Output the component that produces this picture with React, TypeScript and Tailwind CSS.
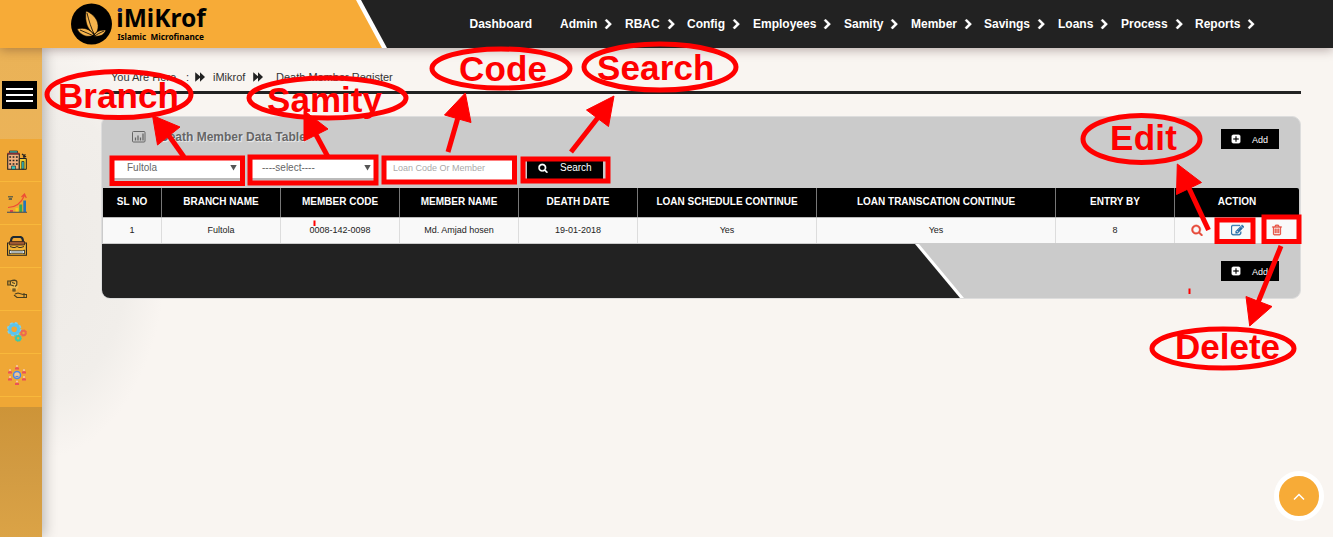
import React from 'react';

const NAV: [string, string][] = [
  ['Admin', 'w-[65px]'],
  ['RBAC', 'w-[62px]'],
  ['Config', 'w-[66px]'],
  ['Employees', 'w-[91px]'],
  ['Samity', 'w-[67px]'],
  ['Member', 'w-[73px]'],
  ['Savings', 'w-[74px]'],
  ['Loans', 'w-[63px]'],
  ['Process', 'w-[74px]'],
  ['Reports', 'w-[62px]'],
];

const COLS: [string, string][] = [
  ['SL NO', '1'],
  ['BRANCH NAME', 'Fultola'],
  ['MEMBER CODE', '0008-142-0098'],
  ['MEMBER NAME', 'Md. Amjad hosen'],
  ['DEATH DATE', '19-01-2018'],
  ['LOAN SCHEDULE CONTINUE', 'Yes'],
  ['LOAN TRANSCATION CONTINUE', 'Yes'],
  ['ENTRY BY', '8'],
];

const GRID = 'grid grid-cols-[59px_119px_119px_119px_119px_179px_239px_119px_124px]';

const PATHS = {
  chevron:
    'M1363 877l-742 742q-19 19-45 19t-45-19l-166-166q-19-19-19-45t19-45l531-531-531-531q-19-19-19-45t19-45l166-166q19-19 45-19t45 19l742 742q19 19 19 45t-19 45z',
  search:
    'M1216 832q0-185-131.5-316.5t-316.5-131.5-316.5 131.5-131.5 316.5 131.5 316.5 316.5 131.5 316.5-131.5 131.5-316.5zm512 832q0 52-38 90t-90 38q-54 0-90-38l-343-342q-179 124-399 124-143 0-273.5-55.5t-225-150-150-225-55.5-273.5 55.5-273.5 150-225 225-150 273.5-55.5 273.5 55.5 225 150 150 225 55.5 273.5q0 220-124 399l343 343q37 37 37 90z',
  plus:
    'M1408 960v-128q0-26-19-45t-45-19h-320v-320q0-26-19-45t-45-19h-128q-26 0-45 19t-19 45v320h-320q-26 0-45 19t-19 45v128q0 26 19 45t45 19h320v320q0 26 19 45t45 19h128q26 0 45-19t19-45v-320h320q26 0 45-19t19-45zm256-544v960q0 119-84.5 203.5t-203.5 84.5h-960q-119 0-203.5-84.5t-84.5-203.5v-960q0-119 84.5-203.5t203.5-84.5h960q119 0 203.5 84.5t84.5 203.5z',
  edit:
    'M888 1184l116-116-152-152-116 116v56h96v96h56zm440-720q-16-16-33 1l-350 350q-17 17-1 33t33-1l350-350q17-17 1-33zm80 594v190q0 119-84.5 203.5t-203.5 84.5h-832q-119 0-203.5-84.5t-84.5-203.5v-832q0-119 84.5-203.5t203.5-84.5h832q63 0 117 25 15 7 18 23 3 17-9 29l-49 49q-14 14-32 8-23-6-45-6h-832q-66 0-113 47t-47 113v832q0 66 47 113t113 47h832q66 0 113-47t47-113v-126q0-13 9-22l64-64q15-15 35-7t20 29zm-96-738l288 288-672 672h-288v-288zm444 132l-92 92-288-288 92-92q28-28 68-28t68 28l152 152q28 28 28 68t-28 68z',
  trash:
    'M704 736v576q0 14-9 23t-23 9h-64q-14 0-23-9t-9-23v-576q0-14 9-23t23-9h64q14 0 23 9t9 23zm256 0v576q0 14-9 23t-23 9h-64q-14 0-23-9t-9-23v-576q0-14 9-23t23-9h64q14 0 23 9t9 23zm256 0v576q0 14-9 23t-23 9h-64q-14 0-23-9t-9-23v-576q0-14 9-23t23-9h64q14 0 23 9t9 23zm128 724v-948h-896v948q0 22 7 40.5t14.5 27 10.5 8.5h832q3 0 10.5-8.5t14.5-27 7-40.5zm-672-1076h448l-48-117q-7-9-17-11h-317q-10 2-17 11zm928 32v64q0 14-9 23t-23 9h-96v948q0 83-47 143.5t-113 60.5h-832q-66 0-113-58.5t-47-141.5v-952h-96q-14 0-23-9t-9-23v-64q0-14 9-23t23-9h309l70-167q15-37 54-63t79-26h320q40 0 79 26t54 63l70 167h309q14 0 23 9t9 23z',
};

function Icon({ name, className }: { name: keyof typeof PATHS; className: string }) {
  return (
    <svg viewBox="0 0 1792 1792" className={className} fill="currentColor" stroke="currentColor" strokeWidth="50">
      <path d={PATHS[name]} />
    </svg>
  );
}

function Logo() {
  return (
    <svg className="ml-[70px] h-12 w-[160px] shrink-0" viewBox="70 0 160 48">
      <circle cx="91.500" cy="24" r="20.500" fill="#000" />
      <g fill="#f7b44c" stroke="#000" strokeWidth=".6">
        <path d="M86 11c8 3 13 10 12 17-.3 3-1.500 5-3.500 6-7-4-10-12-8.500-23z" />
        <path d="M77 29c7-2 13 0 17 6-6 3-13 1-17-6z" />
        <path d="M106 30c-6 0-10 1-12 6 6 1 10-1 12-6z" />
        <path d="M87 13c2 8 4 15 8 23M80 30c5 2 9 4 14 6M104 31c-4 2-7 3-9 5" fill="none" strokeWidth=".8" />
      </g>
      <text x="116.300" y="27" fontFamily="Noto Sans, Open Sans, sans-serif" fontWeight="700" fontSize="24.500" textLength="89.500" lengthAdjust="spacingAndGlyphs">iMiKrof</text>
      <circle cx="119.800" cy="10.300" r="2" fill="#252c74" />
      <text x="117.500" y="40" fontFamily="Noto Sans, sans-serif" fontWeight="700" fontSize="9.500" textLength="28.500" lengthAdjust="spacingAndGlyphs">Islamic</text>
      <text x="150.500" y="40" fontFamily="Noto Sans, sans-serif" fontWeight="700" fontSize="9.500" textLength="53.500" lengthAdjust="spacingAndGlyphs">Microfinance</text>
    </svg>
  );
}

const SIDE_ICONS: React.ReactNode[] = [
  <>
    <path d="M.7 4h11.600v15.300H.7z" fill="#f3b17f" stroke="#222" strokeWidth="1.100" />
    <path d="M2.500 1h8v2h-8z" fill="#38c5c1" stroke="#222" strokeWidth=".7" />
    <path d="M.5 3.500h12" stroke="#8a2b33" strokeWidth="1.500" />
    <path d="M2.300 7h9M2.300 10.500h9M2.300 14h9" stroke="#222" strokeWidth="1.500" strokeDasharray="1.800 1.500" />
    <path d="M4.500 16h4v3.300h-4z" fill="#38c5c1" stroke="#222" strokeWidth=".6" />
    <path d="M12.300 8.500h7v10.800h-7z" fill="#edc92f" stroke="#222" strokeWidth="1" />
    <path d="M14.800 11.500h2.200v7.500h-2.200z" fill="#38c5c1" stroke="#222" strokeWidth=".7" />
    <path d="M15 4l4 3M16 6.500l2.500-2M17 5v4" stroke="#222" strokeWidth="1.300" />
  </>,
  <>
    <path d="M1 3h5v1.500H1zM2 5h3v2H1.500z" fill="#6b6545" />
    <path d="M3 17h3v2H3z" fill="#e8483f" />
    <path d="M8.500 15h2.700v4H8.500z" fill="#f7cf1d" />
    <path d="M12.300 11.500h2.900V19h-2.900z" fill="#3aaa4e" />
    <path d="M16.300 7.500H19V19h-2.700z" fill="#2474bb" />
    <path d="M0 19.300h20" stroke="#575757" strokeWidth="1.200" />
    <path d="M1 14.500c8 0 13-4 16.500-12M14.500 4l3-3 1.800 4" fill="none" stroke="#ee4b35" strokeWidth="1.200" />
  </>,
  <>
    <path d="M4 6c0-3 1-5 3-5h6c2 0 3 2 3 5" fill="none" stroke="#1d2933" strokeWidth="2.200" />
    <path d="M.6 7h18.800v12.300H.6z" fill="#f5b637" stroke="#222" strokeWidth="1.100" />
    <path d="M2.500 5.500h15V9H2.500z" fill="#9c5831" stroke="#3b2417" strokeWidth=".8" />
    <path d="M3 10.500l3 1h2l2-1 2 1h2l3-1" fill="none" stroke="#222" strokeWidth=".9" />
    <path d="M2.500 14l2 .8h11l2-.8v4l-2-.8h-11l-2 .8z" fill="#d8e5ea" stroke="#222" strokeWidth=".8" />
  </>,
  <>
    <circle cx="7" cy="7" r="4.500" fill="#f3bd50" />
    <path d="M.8 2v4h2.500V2zm2.500 0c3-1 6-1 6.500.5V6L8 7.500M4 6l3 1M5 3.500l3 1" fill="none" stroke="#4a4020" strokeWidth="1.200" />
    <path d="M6 10h2v2H6zM8 15l3-1 5 1.500h3.500v3H10L7 16M17 14v4.500" fill="none" stroke="#4a4020" strokeWidth="1.100" />
  </>,
  <>
    <circle cx="7.200" cy="7.200" r="4.600" fill="none" stroke="#5bc4ec" strokeWidth="3.600" />
    <circle cx="7.200" cy="7.200" r="6.500" fill="none" stroke="#7bd0ee" strokeWidth="1.500" strokeDasharray="2.800 2.300" />
    <circle cx="16.500" cy="11" r="2.200" fill="none" stroke="#ed6950" strokeWidth="1.900" />
    <circle cx="16.500" cy="11" r="3.200" fill="none" stroke="#ed6950" strokeWidth=".8" strokeDasharray="1.200 1.300" />
    <circle cx="11.200" cy="16.200" r="2.200" fill="none" stroke="#3ecbaa" strokeWidth="1.900" />
    <circle cx="11.200" cy="16.200" r="3.300" fill="none" stroke="#3ecbaa" strokeWidth=".8" strokeDasharray="1.200 1.300" />
  </>,
  <>
    <circle cx="10" cy="10" r="3.500" fill="#f2c58d" stroke="#4a85e8" strokeWidth="1.500" />
    <path d="M8.500 11.500h3" stroke="#4a85e8" strokeWidth="1.200" />
    {[[10, 0], [3, 4], [17, 4], [3, 11], [17, 11], [10, 15.5]].map(([x, y]) => (
      <g key={`${x}-${y}`}>
        <circle cx={x} cy={y + 1.1} r="1.100" fill="#f7c4a2" />
        <path d={`M${x - 2} ${y + 4.4}v-1.600l1-.6h2l1 .6v1.600z`} fill="#eb5256" />
      </g>
    ))}
  </>,
];

function Sidebar() {
  return (
    <aside className="z-10 flex w-[42px] shrink-0 flex-col bg-linear-to-b from-[#eab257] to-[#f0b95f] shadow-[2px_0_14px_rgba(0,0,0,0.28)]">
      <div className="flex h-[91px] flex-col pt-[33px] pl-[2px]">
        <div className="flex h-7 w-[35px] flex-col justify-center gap-[4px] bg-black px-1">
          <span className="h-[2px] bg-white" />
          <span className="h-[2px] bg-white" />
          <span className="h-[2px] bg-white" />
        </div>
      </div>
      <div className="h-[268px] bg-[#efa735]">
        {SIDE_ICONS.map((icon, i) => (
          <div key={i} className="mr-px flex h-[43px] items-center border-b border-[#f8b83b] pl-[7px]">
            <svg viewBox="0 0 20 20" className="size-5">{icon}</svg>
          </div>
        ))}
      </div>
      <div className="flex-1 bg-linear-to-b from-[#cd9438] via-[#d29b42] to-[#dba346]" />
    </aside>
  );
}

function Forward() {
  return (
    <svg viewBox="0 0 10 10" className="h-[10px] w-[10px]" fill="#222">
      <path d="M.2.300L5 4.200V.3L10 5 5 9.700V5.800L.2 9.700z" />
    </svg>
  );
}

function AddButton() {
  return (
    <button className="flex h-5 w-[58px] items-center bg-black pl-[10px] text-[9px] leading-[12px] text-white">
      <Icon name="plus" className="mr-[11px] size-[10px]" />
      <span className="pt-[2px]">Add</span>
    </button>
  );
}

function Select({ value, className }: { value: string; className: string }) {
  return (
    <div className={`flex h-5 items-center justify-between border-b-2 border-[#bbb] bg-white pr-[4px] pb-[4px] text-[10px] text-[#666] ${className}`}>
      <span>{value}</span>
      <span className="mt-px h-[6px] w-[7px] bg-[#555] [clip-path:polygon(0_0,100%_0,50%_100%)]" />
    </div>
  );
}

function Panel() {
  return (
    <section className="mt-[22px] flex h-[183px] flex-col overflow-hidden rounded-[9px] border border-[#ddd] bg-[#cbcbcb]">
      <div className="flex h-10 items-center justify-between pr-[21px] pl-[30px] pt-[3px]">
        <h2 className="flex items-center pb-[4px] text-[12px] font-bold text-[#666] [text-shadow:1px_1px_1px_#eee]">
          <svg viewBox="0 0 14 12" className="mr-[14px] h-3 w-[14px]" fill="none" stroke="#666">
            <rect x=".5" y=".5" width="12.500" height="10.500" rx="1" />
            <path d="M3.500 9.500v-3M6 9.500v-5M8.500 9.500v-3M11 9.500v-7" strokeWidth="1.300" />
          </svg>
          Death Member Data Table
        </h2>
        <AddButton />
      </div>
      <div className="flex h-[31px] pt-[3px] pl-[12px]">
        <Select value="Fultola" className="w-[127px] pl-[13px]" />
        <Select value="----select----" className="ml-[11px] w-[123px] pl-[10px]" />
        <input
          placeholder="Loan Code Or Member"
          className="ml-[10px] h-5 w-[127px] bg-white pb-[4px] pl-2 text-[9px] text-[#555] outline-none placeholder:text-[#aaa]"
        />
        <button className="ml-[15px] flex h-[19px] w-[76px] items-center bg-black pb-[4px] pl-[11px] text-[10px] text-white">
          <Icon name="search" className="mr-[12px] size-[10px]" />
          Search
        </button>
      </div>
      <div className="px-px">
        <div className={`${GRID} h-[30px] overflow-hidden rounded-tr-[2px] border-b border-[#bbb] bg-black text-[10px] font-bold text-white`}>
          {COLS.map(([h]) => (
            <div key={h} className="flex items-center justify-center border-r border-[#777] pb-[2px]">{h}</div>
          ))}
          <div className="flex items-center justify-center pb-[2px]">ACTION</div>
        </div>
        <div className={`${GRID} h-[26px] border-b border-[#ccc] bg-[#f9f9f9] text-[9px] text-[#222]`}>
          {COLS.map(([h, v]) => (
            <div key={h} className="flex items-center justify-center border-r border-[#ddd]">{v}</div>
          ))}
          <div className="flex items-center pb-px pl-[16px]">
            <Icon name="search" className="size-[12px] text-[#e74c3c]" />
            <Icon name="edit" className="ml-[28px] size-[13px] text-[#286da8]" />
            <Icon name="trash" className="ml-[27px] size-[12px] text-[#e74c3c]" />
          </div>
        </div>
      </div>
      <div className="relative flex flex-1 items-center justify-end pr-[21px]">
        <div className="absolute inset-0 bg-white [clip-path:polygon(0_0,817px_0,862px_100%,0_100%)]" />
        <div className="absolute inset-0 bg-[#222] [clip-path:polygon(0_0,813px_0,858px_100%,0_100%)]" />
        <AddButton />
      </div>
    </section>
  );
}

const LABELS = [
  { t: 'Branch', x: 58, y: 108.4, w: 121, e: [119, 94.5, 72, 23] },
  { t: 'Samity', x: 267, y: 111.5, w: 115, e: [327.5, 98, 78.5, 20] },
  { t: 'Code', x: 459, y: 80.5, w: 88, e: [501, 68.5, 69, 19.5] },
  { t: 'Search', x: 597, y: 79.5, w: 117.5, e: [660, 67, 76, 23] },
  { t: 'Edit', x: 1110, y: 149.5, w: 67, e: [1141.5, 139, 58.5, 23.5] },
  { t: 'Delete', x: 1175, y: 358.5, w: 105, e: [1223, 348.5, 71, 19.5] },
];

const ARROWS = [
  { head: '152.5,115.5 157.500,145 180,127', line: [167, 133, 184, 157] },
  { head: '304,110.5 304,141 328,129', line: [314, 131, 328, 157] },
  { head: '465.3,93 444.500,115 471,122.500', line: [459, 114, 448, 152] },
  { head: '614,96 586.500,110 608.500,126.500', line: [600, 115, 571, 152] },
  { head: '1177.3,164 1176.500,194.500 1201.500,182.500', line: [1187, 184, 1208.5, 230] },
  { head: '1249.7,326 1246,296.500 1272,306.500', line: [1257, 305, 1281, 246] },
];

const BOXES = [
  [109.5, 155.5, 135.5, 30.5],
  [247.5, 154.5, 131, 31],
  [381.5, 155.5, 135.5, 29],
  [520.5, 156.5, 90, 27],
  [1214.5, 217.5, 41, 26.5],
  [1261.5, 214.5, 40, 29.5],
];

function Annotations() {
  return (
    <svg viewBox="0 0 1333 537" className="pointer-events-none absolute inset-0 z-30 h-[537px] w-[1333px]" fill="none" stroke="#f00">
      {LABELS.map(({ t, x, y, w, e }) => (
        <g key={t}>
          <ellipse cx={e[0]} cy={e[1]} rx={e[2]} ry={e[3]} strokeWidth="5" />
          <text x={x} y={y} textLength={w} fill="#f00" stroke="none" fontSize="35" fontWeight="700" fontFamily="Liberation Sans, sans-serif">{t}</text>
        </g>
      ))}
      {ARROWS.map(({ head, line }) => (
        <g key={head}>
          <polygon points={head} fill="#f00" strokeWidth="1" />
          <line x1={line[0]} y1={line[1]} x2={line[2]} y2={line[3]} strokeWidth="5" />
        </g>
      ))}
      {BOXES.map(([x, y, w, h]) => (
        <rect key={x} x={x + 2.5} y={y + 2.5} width={w - 5} height={h - 5} strokeWidth="5" />
      ))}
      <path d="M314.500 220.500v5.500M1189.500 288.500v5.500" strokeWidth="2" />
    </svg>
  );
}

export default function App() {
  return (
    <div className="relative flex h-[537px] w-[1333px] flex-col overflow-hidden bg-[#f9f5f1] font-['Liberation_Sans',Arial,sans-serif]">
      <header className="z-20 flex h-12 shrink-0 bg-[#222] shadow-[0_2px_10px_rgba(60,30,30,0.35)]">
        <div className="h-12 w-[388px] shrink-0 bg-white [clip-path:polygon(0_0,361px_0,387px_100%,0_100%)]">
          <div className="flex h-12 w-[388px] bg-[#f7ab37] [clip-path:polygon(0_0,356px_0,382px_100%,0_100%)]">
            <Logo />
          </div>
        </div>
        <nav className="ml-[81.500px] flex items-center text-[12px] font-bold text-white">
          <a className="w-[90.500px]">Dashboard</a>
          {NAV.map(([label, w]) => (
            <a key={label} className={`flex shrink-0 items-center gap-[6px] ${w}`}>
              {label}
              <Icon name="chevron" className="size-[11px]" />
            </a>
          ))}
        </nav>
      </header>
      <div className="flex flex-1">
        <Sidebar />
        <main className="flex-1 bg-[radial-gradient(ellipse_125px_210px_at_0px_200px,#eeebe7_0%,#f1eeea_70%,#f9f5f1_100%)] pr-8 pl-[59px]">
          <div className="flex h-[46px] items-center border-b-[3px] border-[#222] pt-[15px] pl-[10px] text-[11px] text-[#333]">
            <span className="w-[75px]">You Are Here</span>
            <span className="w-[9px]">:</span>
            <Forward />
            <span className="ml-[8px] w-[40px]">iMikrof</span>
            <Forward />
            <span className="ml-[13px]">Death Member Register</span>
          </div>
          <Panel />
        </main>
      </div>
      <button className="absolute top-[471px] left-[1274px] flex size-[50px] items-center justify-center rounded-full border-[5px] border-white bg-[#f7ab37]">
        <svg viewBox="0 0 12 8" className="mt-[2px] h-2 w-3" fill="none" stroke="#fff" strokeWidth="1.500">
          <path d="M1 6.500l5-5 5 5" />
        </svg>
      </button>
      <Annotations />
    </div>
  );
}
